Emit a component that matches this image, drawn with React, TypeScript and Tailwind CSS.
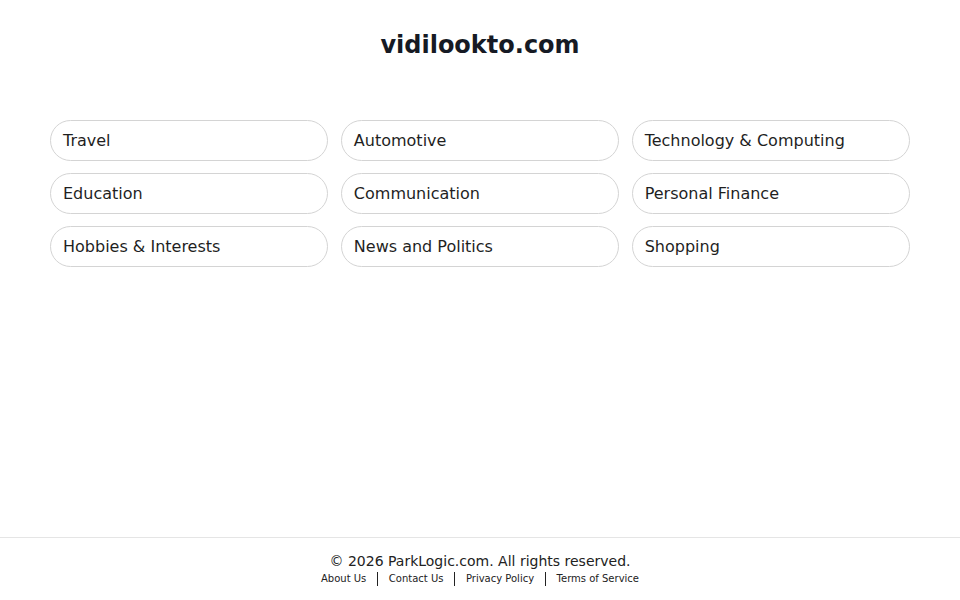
const categories = [
  "Travel",
  "Automotive",
  "Technology & Computing",
  "Education",
  "Communication",
  "Personal Finance",
  "Hobbies & Interests",
  "News and Politics",
  "Shopping",
];

const links = ["About Us", "Contact Us", "Privacy Policy", "Terms of Service"];

export default function App() {
  return (
    <div
      className="min-h-screen flex flex-col bg-white text-[#1a1a1a]"
      style={{ fontFamily: '"DejaVu Sans", sans-serif' }}
    >
      <main className="flex-1">
        <h1 className="pt-[29px] text-center text-[24px] leading-[32px] font-bold text-[#161a24]">
          vidilookto.com
        </h1>
        <div className="mx-auto mt-[59px] w-[860px] grid grid-cols-3 gap-x-[12.5px] gap-y-[12px]">
          {categories.map((c) => (
            <a
              key={c}
              href="#"
              className="h-[41px] flex items-center px-[12px] rounded-full border border-[#d4d4d4] text-[16px] text-[#1f1f1f]"
            >
              {c}
            </a>
          ))}
        </div>
      </main>
      <footer className="h-[63px] border-t border-[#e5e5e5] flex flex-col items-center pt-[14px]">
        <p className="text-[14px] leading-[18px] text-[#222]">
          © 2026 ParkLogic.com. All rights reserved.
        </p>
        <div className="mt-[1px] flex items-center text-[10px] leading-[16px] text-[#222]">
          {links.map((l, i) => (
            <div key={l} className="flex items-center">
              {i > 0 && <span className="mx-[10.5px] w-[1.5px] h-[14px] bg-[#222]" />}
              <a href="#">{l}</a>
            </div>
          ))}
        </div>
      </footer>
    </div>
  );
}
